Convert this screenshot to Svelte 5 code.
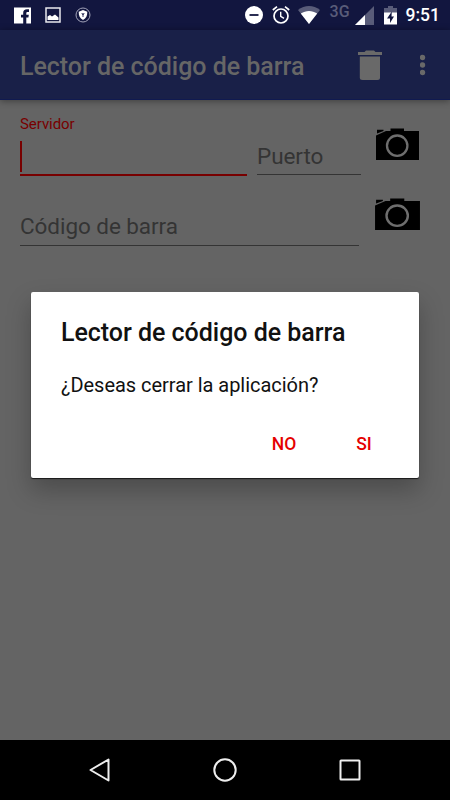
<script lang="ts">
	// Title is shared by the app bar and the exit dialog
	const title = 'Lector de código de barra';

	let server = $state('');
	let dialogShown = $state(true);

	function close(): void {
		dialogShown = false;
	}
</script>

{#snippet camera(wide: boolean)}
	<svg class="camera" class:wide viewBox="0 0 45 33" preserveAspectRatio="none">
		<path d="M1 7.5 11 3H15.5V.5H29V3H44V32H1z" fill="#000" />
		<path d="M2 1.8H8.5V3L2 5.5z" fill="#000" />
		<circle cx="22.2" cy="17.7" r="10.2" fill="none" stroke="#6e6e6e" stroke-width="2.3" />
	</svg>
{/snippet}

<div class="screen">
	<div class="status">
		<div class="notifications">
			<svg width="17" height="17" viewBox="0 0 17 17">
				<path d="M0 .5H17V16.500H12.300V10.500H14.400L14.800 7.800H12.300V6.300C12.300 5.300 12.700 4.900 13.600 4.900H15V2.300H13C10.500 2.300 9.200 3.700 9.200 5.900V7.800H7V10.500H9.200V16.500H0z" fill="#fff" />
			</svg>
			<svg width="16" height="16" viewBox="0 0 16 16">
				<rect x="1" y="1" width="14" height="14" fill="none" stroke="#e9e9ee" stroke-width="1.5" />
				<path d="M2.5 13V9.5L5 8l2 1.5L10 7.5l3.5 3V13z" fill="#fff" />
			</svg>
			<svg width="16" height="16" viewBox="0 0 16 16">
				<circle cx="8" cy="8" r="7" fill="none" stroke="#a2a3b9" />
				<path d="M8 3 12.3 4.7C12.3 8.5 11.3 11.2 8 13 4.7 11.2 3.7 8.5 3.7 4.7z" fill="#fff" />
				<path d="M8 6v4M6.8 6.2 8 8l1.2-1.8" fill="none" stroke="#36395f" />
			</svg>
		</div>
		<div class="system">
			<svg width="18" height="18" viewBox="0 0 18 18">
				<circle cx="9" cy="9" r="9" fill="#fff" />
				<path d="M4.5 9h9" stroke="#12163f" stroke-width="1.8" />
			</svg>
			<svg class="alarm" width="18" height="18" viewBox="0 0 18 18">
				<g fill="none" stroke="#fff" stroke-width="1.7">
					<circle cx="9" cy="10" r="7" />
					<path d="M.8 4 5 .7M17.2 4 13 .7" />
					<path d="M8.7 5.8v4.5l3.3 2" stroke-width="1.4" />
				</g>
			</svg>
			<svg class="wifi" width="22" height="18" viewBox="0 0 22 18">
				<path d="M0 4C6.5-1.3 15.5-1.3 22 4L11 18z" fill="#595c79" />
				<path d="M2.8 7.6C8 4 14 4 19.200 7.600L11 18z" fill="#fff" />
			</svg>
			<span class="network">3G</span>
			<svg class="signal" width="19" height="19" viewBox="0 0 19 19">
				<path d="M19 0V19H0z" fill="#595c79" />
				<path d="M10 9V19H0z" fill="#fff" />
			</svg>
			<svg class="battery" width="13" height="19" viewBox="0 0 13 19">
				<path d="M4 0H9V2H13V7H0V2H4z" fill="#595c79" />
				<path d="M0 6.5H13V18.5H0z" fill="#fff" />
				<path d="M7.8 5.5 3 12.5H6V17L10 10.5H7.5z" fill="#12163f" />
			</svg>
			<span class="clock">9:51</span>
		</div>
	</div>

	<header>
		<h1>{title}</h1>
		<svg class="trash" width="24" height="31" viewBox="0 0 24 31">
			<path d="M0 2H6.5L8 .5H16L17.5 2H24V5H0z" />
			<path d="M1.8 6.5H22V27.5Q22 30 19.5 30H4.5Q1.8 30 1.8 27.5z" />
		</svg>
		<svg class="more" width="6" height="22" viewBox="0 0 6 22">
			<circle cx="2.5" cy="3.5" r="2.7" />
			<circle cx="2.5" cy="11" r="2.7" />
			<circle cx="2.5" cy="18.5" r="2.7" />
		</svg>
	</header>

	<main>
		<div class="row">
			<div class="field server">
				<span class="label">Servidor</span>
				<div class="value">{server}<i class="caret"></i></div>
			</div>
			<div class="field port">Puerto</div>
			{@render camera(false)}
		</div>
		<div class="row second">
			<div class="field code">Código de barra</div>
			{@render camera(true)}
		</div>
	</main>

	<nav>
		<svg width="24" height="26" viewBox="0 0 24 26">
			<path d="M20.5 2.5V23.5L2.5 13z" />
		</svg>
		<svg width="24" height="26" viewBox="0 0 24 26">
			<circle cx="12" cy="13" r="10.7" />
		</svg>
		<svg width="24" height="26" viewBox="0 0 24 26">
			<rect x="2.500" y="3.500" width="19" height="19" rx=".5" />
		</svg>
	</nav>

	{#if dialogShown}
		<div class="dialog">
			<h2>{title}</h2>
			<p>¿Deseas cerrar la aplicación?</p>
			<div class="buttons">
				<button onclick={close}>NO</button>
				<button onclick={close}>SI</button>
			</div>
		</div>
	{/if}
</div>

<style>
	:global(body) {
		background: #646464;
	}
	.screen {
		position: relative;
		display: flex;
		flex-direction: column;
		width: 450px;
		height: 800px;
		overflow: hidden;
		background: #646464;
		font-family: Roboto, sans-serif;
	}
	svg {
		display: block;
		flex: none;
	}
	.status {
		display: flex;
		justify-content: space-between;
		height: 30px;
		padding: 0 10px 0 14px;
		background: #12163f;
	}
	.notifications,
	.system {
		display: flex;
		align-items: center;
	}
	.notifications {
		gap: 14px;
	}
	.alarm {
		margin-left: 9px;
	}
	.wifi {
		margin-left: 8px;
	}
	.network {
		align-self: flex-start;
		width: 20px;
		margin: 3px 5px 0 10px;
		color: #595c79;
		font-size: 16px;
		font-weight: 500;
		line-height: 17px;
	}
	.battery {
		margin: 0 9px 0 10px;
	}
	.clock {
		color: #fff;
		font-size: 17.5px;
		font-weight: 500;
		line-height: 31px;
	}
	header {
		display: flex;
		align-items: center;
		height: 70px;
		box-sizing: border-box;
		padding: 0 24px 0 20px;
		background: #192048;
		border-bottom: 1px solid #101a50;
		box-shadow: 0 1px 7px rgba(0,0,0,.4);
		fill: #696969;
	}
	h1 {
		flex: 1;
		margin: 5px 0 0;
		color: #666;
		font-size: 25px;
		font-weight: 500;
		line-height: 30px;
		letter-spacing: -.03px;
		white-space: nowrap;
	}
	.trash {
		margin-top: 1px;
	}
	.more {
		margin-left: 38px;
	}
	main {
		flex: 1;
		padding: 15px 30px 0 20px;
	}
	.row {
		display: flex;
		height: 62px;
	}
	.field {
		box-sizing: border-box;
		border-bottom: 1px solid #343434;
		color: #343434;
		font-size: 22.5px;
		line-height: 28px;
		letter-spacing: -.06px;
	}
	.server {
		width: 227px;
		height: 61px;
		margin-right: 10px;
		border-bottom: 2px solid #780000;
	}
	.label {
		display: block;
		color: #780000;
		font-size: 15px;
		line-height: 18px;
	}
	.value {
		display: flex;
		height: 31px;
		margin-top: 8px;
	}
	.caret {
		width: 2px;
		background: #780000;
	}
	.port {
		width: 104px;
		height: 60px;
		padding-top: 27px;
	}
	.camera {
		width: 45px;
		height: 33px;
		margin: 13px 0 0 auto;
	}
	.camera.wide {
		width: 47px;
		margin: 0 -1px 0 auto;
	}
	.second {
		margin-top: 21px;
	}
	.code {
		width: 339px;
		height: 48px;
		padding-top: 14px;
	}
	nav {
		display: flex;
		justify-content: center;
		align-items: center;
		gap: 101px;
		height: 60px;
		background: #000;
		fill: none;
		stroke: #eee;
		stroke-width: 2;
		stroke-linejoin: round;
	}
	.dialog {
		position: absolute;
		top: 292px;
		left: 31px;
		width: 388px;
		height: 186px;
		box-sizing: border-box;
		padding: 26px 30px 0;
		background: #fff;
		border-radius: 2px;
		box-shadow: 0 1px 1px rgba(0,0,0,.7), 0 12px 24px rgba(0,0,0,.25);
	}
	h2 {
		margin: 0;
		color: #111;
		font-size: 25px;
		font-weight: 500;
		line-height: 30px;
		letter-spacing: -.03px;
		white-space: nowrap;
	}
	p {
		margin: 25px 0 0;
		color: #111;
		font-size: 20px;
		line-height: 24px;
		letter-spacing: -.03px;
	}
	.buttons {
		display: flex;
		justify-content: flex-end;
		gap: 10px;
		margin: 24px -10px 0 0;
	}
	button {
		width: 70px;
		height: 46px;
		padding: 0;
		border: none;
		background: none;
		color: #e50000;
		font: 500 17.5px Roboto, sans-serif;
		cursor: pointer;
	}
</style>
